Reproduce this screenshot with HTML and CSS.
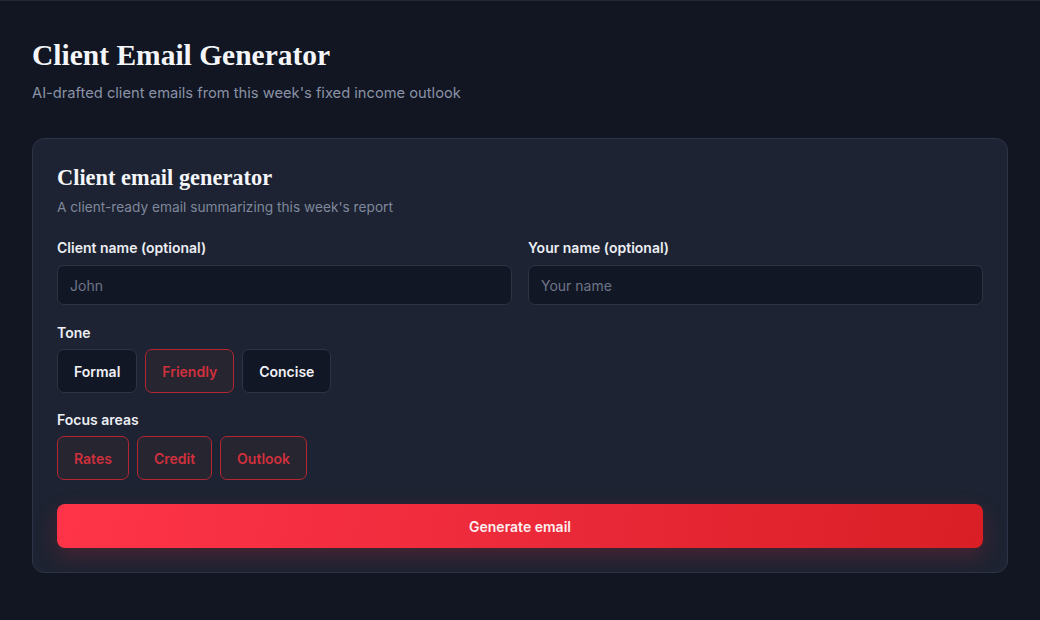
FILE: index.html
```html
<!DOCTYPE html>
<html lang="en">
<head>
  <meta charset="UTF-8">
  <title>Client Email Generator</title>
  <link rel="stylesheet" href="styles.css">
</head>
<body>
<div class="page">
  <div class="h1">Client Email Generator</div>
  <div class="lead">AI-drafted client emails from this week's fixed income outlook</div>

  <div class="card">
    <div class="h2">Client email generator</div>
    <div class="sub">A client-ready email summarizing this week's report</div>

    <div class="row">
      <div class="field">
        <label class="label">Client name (optional)</label>
        <input class="input" type="text" placeholder="John">
      </div>
      <div class="field">
        <label class="label">Your name (optional)</label>
        <input class="input" type="text" placeholder="Your name">
      </div>
    </div>

    <div class="label">Tone</div>
    <div class="chips">
      <button class="chip">Formal</button>
      <button class="chip active">Friendly</button>
      <button class="chip">Concise</button>
    </div>

    <div class="label">Focus areas</div>
    <div class="chips">
      <button class="chip active">Rates</button>
      <button class="chip active">Credit</button>
      <button class="chip active">Outlook</button>
    </div>

    <button class="generate">Generate email</button>
  </div>
</div>
</body>
</html>
```

FILE: styles.css
```css
html, body {
  margin: 0;
  background: #111622;
}
body {
  border-top: 1px solid #222938;
  font-family: 'Inter', 'Liberation Sans', sans-serif;
  color: #e8eaf0;
}
.page {
  padding: 38px 32px 40px 32px;
}
.h1 {
  font-family: 'Liberation Serif', 'DejaVu Serif', serif;
  font-size: 29.5px;
  font-weight: 700;
  color: #f4f5f8;
  line-height: 32px;
}
.lead {
  margin-top: 12px;
  font-size: 14.7px;
  color: #8a92a6;
  line-height: 20px;
}
.card {
  margin-top: 35px;
  background: #1d2332;
  border: 1px solid #2c3445;
  border-radius: 12px;
  padding: 26px 24px 24px 24px;
}
.h2 {
  font-family: 'Liberation Serif', 'DejaVu Serif', serif;
  font-size: 22.4px;
  font-weight: 700;
  color: #f4f5f8;
  line-height: 26px;
}
.sub {
  margin-top: 7px;
  font-size: 13.7px;
  color: #7f889c;
  line-height: 18px;
}
.row {
  display: grid;
  grid-template-columns: 1fr 1fr;
  gap: 16px;
  margin-top: 22px;
}
.field {
  display: flex;
  flex-direction: column;
}
.label {
  display: block;
  font-size: 14px;
  font-weight: 600;
  color: #eceef3;
  line-height: 20px;
  margin-bottom: 6px;
}
.field .label {
  margin-bottom: 7px;
}
.input {
  height: 40px;
  box-sizing: border-box;
  background: #121725;
  border: 1px solid #2c3445;
  border-radius: 7px;
  padding: 0 12px;
  font-family: inherit;
  font-size: 14px;
  color: #e8eaf0;
  margin-bottom: 18px;
}
.input::placeholder {
  color: #6d7588;
}
.chips {
  display: flex;
  gap: 8px;
  margin-bottom: 17px;
}
.chip {
  height: 44px;
  padding: 0 16px;
  background: #121725;
  border: 1px solid #2c3445;
  border-radius: 7px;
  font-family: inherit;
  font-size: 14px;
  font-weight: 600;
  color: #f1f2f6;
}
.chip.active {
  background: #272530;
  border-color: #b22631;
  color: #d0303c;
}
.generate {
  display: block;
  width: 100%;
  height: 44px;
  margin-top: 24px;
  border: 0;
  border-radius: 8px;
  background: linear-gradient(100deg, #ff3449 0%, #ec2a3a 50%, #d91f25 100%);
  box-shadow: 0 8px 22px rgba(230, 40, 55, 0.22);
  font-family: inherit;
  font-size: 14px;
  font-weight: 600;
  color: #fdeff0;
}
```
